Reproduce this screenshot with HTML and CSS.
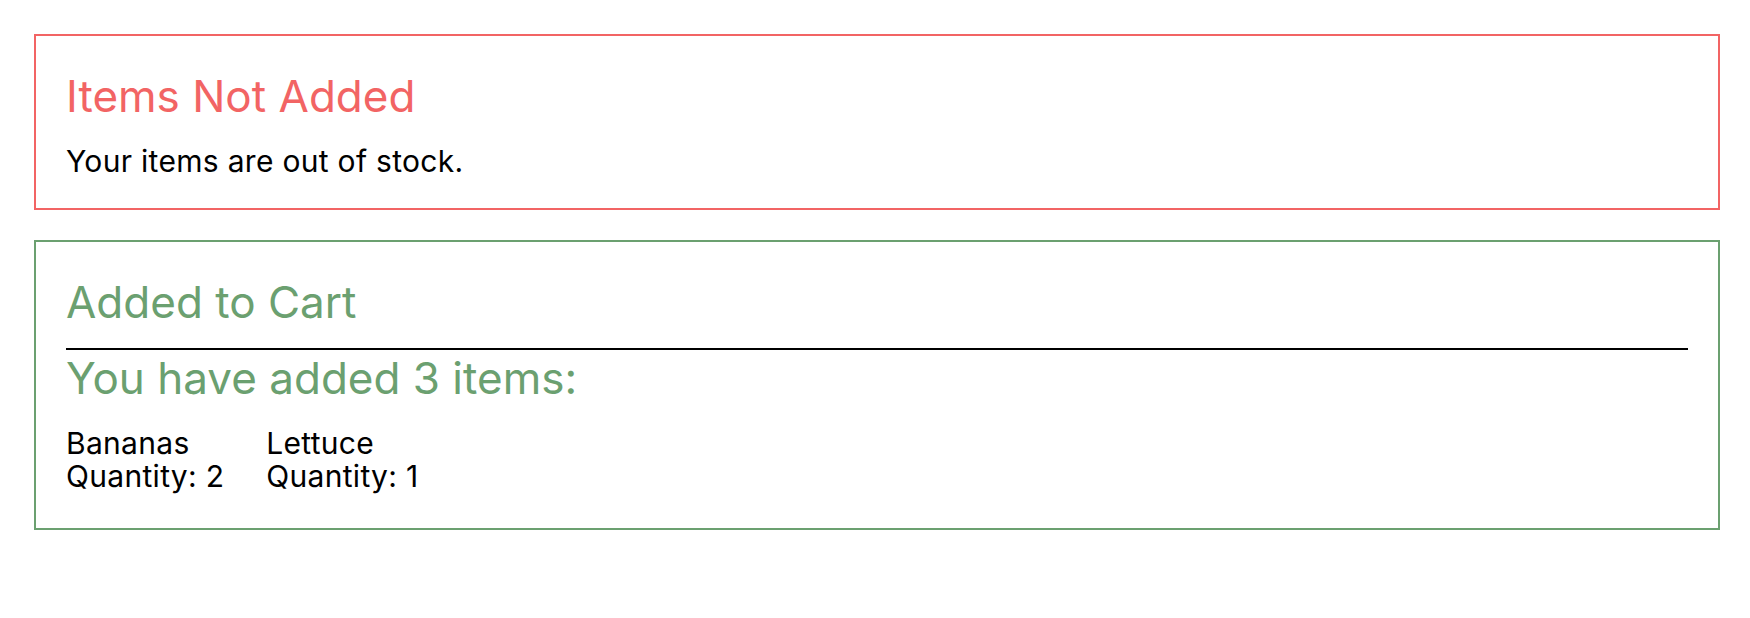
FILE: index.html
```html
<!DOCTYPE html>
<html lang="en">
<head>
  <meta charset="UTF-8">
  <meta name="viewport" content="width=device-width, initial-scale=1.0">
  <title>Cart</title>
  <link rel="stylesheet" href="styles.css">
</head>
<body>

  <div id="cart-messages">

    <!-- Error message -->
    <div class="message message-error">
      <h2>Items Not Added</h2>
      <p>Your items are out of stock.</p>
    </div>

    <!-- Success message -->
    <div class="message message-success">
      <h2 class="title">Added to Cart</h2>
      <hr>
      <h2>You have added 3 items:</h2>
      <ul class="cart-items">
        <li>
          <span>Bananas</span>
          <span>Quantity: 2</span>
        </li>
        <li>
          <span>Lettuce</span>
          <span>Quantity: 1</span>
        </li>
      </ul>
    </div>

  </div>

</body>
</html>
```

FILE: styles.css
```css
/* Page */
body {
  margin: 0;
  font-family: Inter, "Noto Sans", sans-serif;
  color: #000;
  background-color: #fff;
}

#cart-messages {
  padding: 34px 30px 0 34px;
  display: flex;
  flex-direction: column;
  gap: 30px;
}

/* Message boxes */
.message {
  border: 2px solid;
  padding: 32px 30px 30px;
}

.message h2 {
  margin: 0 0 21px;
  font-size: 44px;
  font-weight: 400;
  line-height: 56px;
}

.message h2.title {
  margin-bottom: 18px;
}

.message p {
  margin: 0;
  font-size: 30px;
  line-height: 33px;
  letter-spacing: 0.3px;
}

.message hr {
  margin: 0;
  border: none;
  border-top: 2px solid #000;
}

.message-error {
  border-color: #f26464;
}

.message-error h2 {
  color: #f26464;
}

.message-success {
  border-color: #6ba070;
}

.message-success h2 {
  color: #6ba070;
}

/* Cart items */
.cart-items {
  list-style-type: none;
  margin: 0 0 5px;
  padding: 0;
  display: flex;
  gap: 42px;
}

.cart-items li {
  display: flex;
  flex-direction: column;
  font-size: 30px;
  line-height: 33px;
  letter-spacing: 0.3px;
}
```
